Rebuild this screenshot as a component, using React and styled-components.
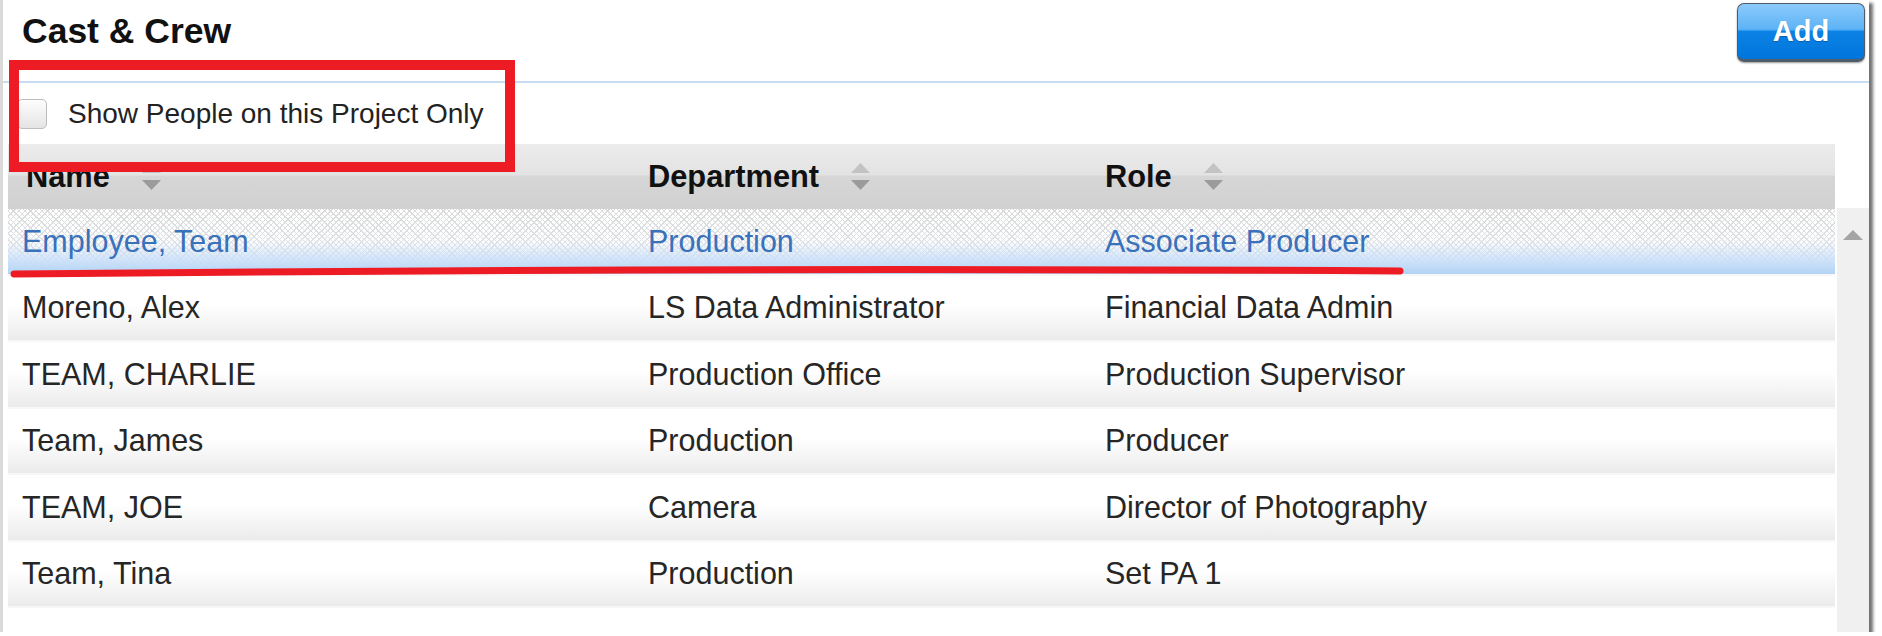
import React from "react";
import styled, { createGlobalStyle } from "styled-components";

const GlobalStyle = createGlobalStyle`
  html, body {
    margin: 0;
    padding: 0;
    background: #ffffff;
  }
  body {
    font-family: "Liberation Sans", Arial, sans-serif;
  }
`;

const Panel = styled.section`
  position: relative;
  width: 1869px;
  height: 632px;
  box-sizing: border-box;
  border-left: 3px solid #d9d9d9;
  background: #ffffff;
  box-shadow: 4px 3px 3px rgba(0, 0, 0, 0.55);
  display: flex;
  flex-direction: column;
`;

const TitleBar = styled.header`
  height: 81px;
  display: flex;
  justify-content: space-between;
  align-items: flex-start;
  padding: 0 4px 0 19px;
  border-bottom: 2px solid #c8dcf4;
`;

const Title = styled.h2`
  margin: 14px 0 0;
  font-size: 35.5px;
  line-height: 35px;
  font-weight: bold;
  color: #111111;
`;

const AddButton = styled.button`
  margin-top: 3px;
  width: 128px;
  height: 59px;
  border: 1px solid #4f5d6b;
  border-bottom-width: 3px;
  border-radius: 7px;
  background: linear-gradient(
    to bottom,
    #8ccafb 0%,
    #5db3f6 46%,
    #0c82e6 50%,
    #0076dc 100%
  );
  color: #ffffff;
  font-family: inherit;
  font-size: 29px;
  font-weight: bold;
  text-shadow: 0 1px 1px rgba(0, 0, 0, 0.25);
  box-shadow: 0 1px 2px rgba(0, 0, 0, 0.4);
  cursor: pointer;
`;

const FilterRow = styled.label`
  height: 61px;
  display: flex;
  align-items: center;
  gap: 21px;
  padding-left: 14px;
  font-size: 28px;
  color: #222222;
`;

const Box = styled.span`
  width: 30px;
  height: 30px;
  box-sizing: border-box;
  border: 1.5px solid #bdbdbd;
  border-radius: 5px;
  background: linear-gradient(#fdfdfd, #e4e4e4);
`;

const TableArea = styled.div`
  flex: 1;
  display: flex;
  gap: 2px;
  padding-left: 5px;
`;

const Grid = styled.div`
  flex: 1;
  display: flex;
  flex-direction: column;
`;

const columns = "626px 457px 1fr";

const HeadRow = styled.div`
  height: 65px;
  display: grid;
  grid-template-columns: ${columns};
  align-items: center;
  background: linear-gradient(
    to bottom,
    #ececec 0%,
    #e3e3e3 47%,
    #d6d6d6 50%,
    #d1d1d1 100%
  );
`;

const HeadCell = styled.div`
  display: flex;
  align-items: center;
  gap: 32px;
  padding-left: ${(p) => p.$pad || 14}px;
  font-size: 30.8px;
  font-weight: bold;
  color: #111111;
`;

const selectedBg = `
  linear-gradient(
    to bottom,
    rgba(255, 255, 255, 0) 0%,
    rgba(240, 246, 253, 0.3) 50%,
    rgba(200, 223, 249, 0.95) 82%,
    #b3d3f5 100%
  ),
  repeating-linear-gradient(45deg, #d9d9d9 0 1px, transparent 1px 4px),
  repeating-linear-gradient(-45deg, #d9d9d9 0 1px, transparent 1px 4px),
  #ffffff
`;

const Row = styled.div`
  height: 66.5px;
  box-sizing: border-box;
  display: grid;
  grid-template-columns: ${columns};
  align-items: center;
  border-bottom: 2px solid #f7f7f7;
  background: ${(p) =>
    p.$selected
      ? selectedBg
      : "linear-gradient(to bottom, #ffffff 0%, #ffffff 45%, #ebebeb 100%)"};
  color: ${(p) => (p.$selected ? "#3a71bb" : "#262626")};
  font-size: 30.5px;
`;

const Cell = styled.div`
  padding-left: 14px;
  white-space: nowrap;
`;

const Scrollbar = styled.div`
  width: 32px;
  margin-top: 64px;
  padding-top: 22px;
  box-sizing: border-box;
  background: #f0f0f0;
  display: flex;
  justify-content: center;
  align-items: flex-start;
`;

const Callout = styled.div`
  position: absolute;
  left: 6px;
  top: 60px;
  width: 506px;
  height: 112px;
  box-sizing: border-box;
  border: 10px solid #ed1c24;
  pointer-events: none;
`;

const Underline = styled.svg`
  position: absolute;
  left: 7px;
  top: 261px;
  pointer-events: none;
`;

function SortArrows() {
  return (
    <svg width="19" height="27" viewBox="0 0 19 27">
      <polygon points="0,10 9.5,0 19,10" fill="#c3c3c3" />
      <polygon points="0,17 19,17 9.5,27" fill="#9b9b9b" />
    </svg>
  );
}

const people = [
  ["Employee, Team", "Production", "Associate Producer"],
  ["Moreno, Alex", "LS Data Administrator", "Financial Data Admin"],
  ["TEAM, CHARLIE", "Production Office", "Production Supervisor"],
  ["Team, James", "Production", "Producer"],
  ["TEAM, JOE", "Camera", "Director of Photography"],
  ["Team, Tina", "Production", "Set PA 1"],
];

export default function App() {
  return (
    <>
      <GlobalStyle />
      <Panel>
        <TitleBar>
          <Title>Cast &amp; Crew</Title>
          <AddButton>Add</AddButton>
        </TitleBar>

        <FilterRow>
          <Box />
          Show People on this Project Only
        </FilterRow>

        <TableArea>
          <Grid>
            <HeadRow>
              <HeadCell $pad={18}>
                Name <SortArrows />
              </HeadCell>
              <HeadCell>
                Department <SortArrows />
              </HeadCell>
              <HeadCell>
                Role <SortArrows />
              </HeadCell>
            </HeadRow>
            {people.map(([name, dept, role], i) => (
              <Row key={name} $selected={i === 0}>
                <Cell>{name}</Cell>
                <Cell>{dept}</Cell>
                <Cell>{role}</Cell>
              </Row>
            ))}
          </Grid>
          <Scrollbar>
            <svg width="20" height="10" viewBox="0 0 20 10">
              <polygon points="0,10 10,0 20,10" fill="#a4a4a4" />
            </svg>
          </Scrollbar>
        </TableArea>

        <Callout />
        <Underline width="1396" height="22" viewBox="0 0 1396 22">
          <path
            d="M4 13 Q 700 6 1390 10"
            fill="none"
            stroke="#ed1c24"
            strokeWidth="7"
            strokeLinecap="round"
          />
        </Underline>
      </Panel>
    </>
  );
}
